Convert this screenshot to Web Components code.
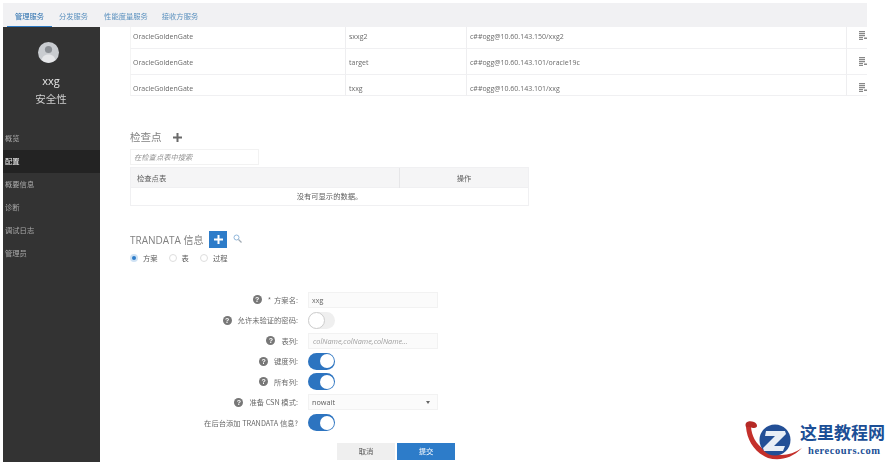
<!DOCTYPE html>
<html lang="zh"><head><meta charset="utf-8"><title>安全性</title>
<style>
html,body{margin:0;height:100%;background:#fff;overflow:hidden}
body{font-family:"Open Sans","Noto Sans CJK SC",sans-serif;color:#555}
</style></head><body>
<ogg-app></ogg-app>
<template id="t-app">
<style>
:host{display:flex;flex-direction:column;width:890px;height:462px;box-sizing:border-box;padding:3px 23px 0 3px;position:relative;overflow:hidden;font-family:"Open Sans","Noto Sans CJK SC",sans-serif}
.body{display:flex;flex:1;min-height:0}
main{flex:1;min-width:0;padding-left:30px;display:flex;flex-direction:column;filter:blur(.45px)}
</style>
<ogg-tabs></ogg-tabs>
<div class="body"><ogg-side></ogg-side>
<main>
<ogg-deptable></ogg-deptable>
<ogg-checkpoints></ogg-checkpoints>
<ogg-trandata></ogg-trandata>
</main></div>
<ogg-mark></ogg-mark>
</template>

<template id="t-tabs">
<style>
:host{display:flex;height:24px;background:#f1f1f3;flex:none;padding-left:4px;font:7.3px "Noto Sans CJK SC",sans-serif;color:#3f7fb5;filter:blur(.45px)}
span{display:flex;align-items:center;justify-content:center;height:24px;box-sizing:border-box;padding-top:2px;white-space:nowrap;flex:none;opacity:.85}
span.a{width:45px;margin-right:7px;border-bottom:1.5px solid #2d7ac4;color:#2a6fae;opacity:1}
</style>
<span class="a">管理服务</span><span style="width:29px;margin-right:16px">分发服务</span><span style="width:44px;margin-right:14px">性能度量服务</span><span style="width:36px">接收方服务</span>
</template>

<template id="t-side">
<style>
:host{display:flex;flex-direction:column;width:97px;flex:none;background:#333;color:#eee;filter:blur(.45px);padding-top:15px;box-sizing:border-box}
.av{width:21px;height:21px;margin-left:35px;display:block}
.u{margin:10px 0 0;text-align:center;font:11px/15px "Open Sans",sans-serif;padding-right:1px;color:#e6e6e6}
.r{text-align:center;font:10.5px/17px "Noto Sans CJK SC",sans-serif;margin-top:2px;padding-right:1px;color:#cfcfcf}
nav{display:flex;flex-direction:column;margin-top:20px;font:7.3px/23px "Noto Sans CJK SC",sans-serif;color:#aaa}
nav span{height:23px;padding-left:2px}
nav .on{background:#232323;color:#f2f2f2}
</style>
<svg class="av" viewBox="0 0 21 21"><circle cx="10.5" cy="10.5" r="10.5" fill="#c9ccd0"/><circle cx="10.5" cy="7.5" r="3.6" fill="#8b8f94"/><path d="M3.5 18c1-4 3.600-5.600 7-5.600s6 1.600 7 5.600a10.500 10.500 0 0 1-14 0z" fill="#e6e7e9"/></svg>
<div class="u">xxg</div><div class="r">安全性</div>
<nav><span>概览</span><span class="on">配置</span><span>概要信息</span><span>诊断</span><span>调试日志</span><span>管理员</span></nav>
</template>

<template id="t-deptable">
<style>
:host{display:grid;grid-template-columns:215px 121px 380px 21px;grid-template-rows:22px 26px 21px;flex:none;font-size:7px;color:#6a6a6a}
div{display:flex;align-items:center;border-bottom:1px solid #f0f0f2;box-sizing:border-box;padding-left:3px;padding-top:2px;border-left:1px solid #eeeef0}
div.f{border-left:1px solid #f4f4f4;padding-left:2px}
.r1{padding-top:0;padding-bottom:2px}
.r3{padding-top:7px}
.ic{padding-left:0}
</style>
<div class="f r1">OracleGoldenGate</div><div class="r1">sxxg2</div><div class="r1">c##ogg@10.60.143.150/xxg2</div><div class="ic r1"><ogg-doc></ogg-doc></div>
<div class="f">OracleGoldenGate</div><div>target</div><div>c##ogg@10.60.143.101/oracle19c</div><div class="ic"><ogg-doc></ogg-doc></div>
<div class="f r3">OracleGoldenGate</div><div class="r3">txxg</div><div class="r3">c##ogg@10.60.143.101/xxg</div><div class="ic r3"><ogg-doc></ogg-doc></div>
</template>

<template id="t-doc">
<style>:host{display:block;width:8px;height:9px;margin:-3px 0 0 12px}svg{display:block}</style>
<svg width="8" height="9" viewBox="0 0 8 9"><path d="M0 0h6v1.200H0zM0 2h6v1.200H0zM0 4h6v1.200H0zM0 6h4v1.200H0zM0 8h4v1H0zM5 6.500h3v1.600H5z" fill="#888"/></svg>
</template>

<template id="t-check">
<style>
:host{display:block;flex:none;margin-top:33px;width:399px}
h2{margin:0;font:400 10.5px/16px "Noto Sans CJK SC",sans-serif;color:#808080;display:flex;align-items:center;height:16px}
svg{margin-left:11px}
.s{margin-top:4px;width:129px;height:16px;border:1px solid #f2f2f2;box-sizing:border-box;font:italic 7.3px/14px "Noto Sans CJK SC",sans-serif;color:#929292;padding-left:3px}
.h{display:grid;grid-template-columns:268px 1fr;height:21px;margin-top:2px;background:#f5f5f6;border:1px solid #f0f0f2;box-sizing:border-box;font:7.3px/20px "Noto Sans CJK SC",sans-serif;color:#5c5c5c}
.h span:first-child{padding-left:6px}
.h span:last-child{text-align:center;border-left:1px solid #e6e6e8}
.e{height:18px;border:1px solid #f0f0f2;border-top:0;box-sizing:border-box;text-align:center;font:7.3px/17px "Noto Sans CJK SC",sans-serif;color:#5c5c5c}
</style>
<h2>检查点<svg width="9" height="9" viewBox="0 0 9 9"><path d="M3.500 0h2v3.500H9v2H5.500V9h-2V5.500H0v-2h3.500z" fill="#6a6a6a"/></svg></h2>
<div class="s">在检查点表中搜索</div>
<div class="h"><span>检查点表</span><span>操作</span></div>
<div class="e">没有可显示的数据。</div>
</template>

<template id="t-tran">
<style>
:host{display:block;flex:none;margin-top:25px}
.t{display:flex;align-items:center;height:17px;font:400 10px/17px "Open Sans","Noto Sans CJK SC",sans-serif;color:#808080}
.tx{margin-top:1px;width:72px;white-space:nowrap}
.b{width:18px;height:17px;background:#2d7cc9;display:flex;align-items:center;justify-content:center;margin:0 0 0 7px}
.m{margin-left:6px;margin-top:-2px}
.radios{display:flex;align-items:center;height:14px;margin-top:3px;font:7.3px/14px "Noto Sans CJK SC",sans-serif;color:#5c5c5c}
.radios i{width:8px;height:8px;border-radius:50%;border:1px solid #ddd;box-sizing:border-box;margin-right:5px;display:block;background:#fff}
.radios i.on{background:#2d7cc9;border:2px solid #cfe2f4}
.radios span{margin-right:11px}
form{display:grid;grid-template-columns:178px 130px;margin-top:24.500px;grid-auto-rows:20.500px;align-items:center;font:7.3px "Noto Sans CJK SC",sans-serif;color:#6a6a6a}
label{justify-self:end;display:flex;align-items:center;padding-right:10px}
label b{width:9px;height:9px;border-radius:50%;background:#777;color:#fff;font:700 7px/9px "Liberation Sans",sans-serif;text-align:center;margin-right:6px;display:block}
label em{font-style:normal;margin-right:3px}
.in{height:16px;border:1px solid #f2f2f2;box-sizing:border-box;line-height:14px;padding-left:3px;background:#fbfbfb;color:#6a6a6a}
.ph{font-style:italic;color:#a0a0a0;font-family:"Open Sans",sans-serif;font-size:7.3px;padding-left:4px}
.sel{display:flex;justify-content:space-between;align-items:center;padding-right:7px;font-family:"Open Sans",sans-serif;font-size:7.3px;color:#5c5c5c}
.sel::after{content:"";border:2.500px solid transparent;border-top:3px solid #666;margin-top:3px}
.sw{width:27px;height:17px;border-radius:9px;background:#2d74c0;position:relative;display:block}
.sw::after{content:"";position:absolute;right:1.500px;top:1.500px;width:14px;height:14px;border-radius:50%;background:#fff}
.sw.off{background:#efefef}
.sw.off::after{right:auto;left:0;top:0;width:15px;height:15px;border:1px solid #ccc}
.act{display:flex;gap:2px;margin:9.500px 0 0 207px;font:7.3px/17px "Noto Sans CJK SC",sans-serif}
.act span{width:58px;height:17px;text-align:center}
.c{background:#efefef;color:#555}.o{background:#2d7cc9;color:#fff}
</style>
<div class="t"><span class="tx">TRANDATA 信息</span><span class="b"><svg width="9" height="9" viewBox="0 0 9 9"><path d="M3.500 0h2v3.500H9v2H5.500V9h-2V5.500H0v-2h3.500z" fill="#fff"/></svg></span>
<svg class="m" width="9" height="9" viewBox="0 0 9 9"><circle cx="3.500" cy="3.500" r="2.500" fill="none" stroke="#8fb6da" stroke-width="1"/><path d="M5.500 5.500L8.500 8.500" stroke="#a2abb4" stroke-width="1.300"/></svg></div>
<div class="radios"><i class="on"></i><span>方案</span><i></i><span>表</span><i></i><span>过程</span></div>
<form>
<label><b>?</b><em>*</em>方案名:</label><div class="in">xxg</div>
<label><b>?</b>允许未验证的密码:</label><span class="sw off"></span>
<label><b>?</b>表列:</label><div class="in ph">colName,colName,colName...</div>
<label><b>?</b>键度列:</label><span class="sw"></span>
<label><b>?</b>所有列:</label><span class="sw"></span>
<label><b>?</b>准备 CSN 模式:</label><div class="in sel">nowait</div>
<label>在后台添加 TRANDATA 信息?</label><span class="sw"></span>
</form>
<div class="act"><span class="c">取消</span><span class="o">提交</span></div>
</template>

<template id="t-mark">
<style>
:host{position:absolute;left:743px;top:418px;width:147px;height:44px;display:block}
svg{position:absolute;left:0;top:0}
.cn{position:absolute;left:57px;top:4px;font:700 17px/20px "Noto Sans CJK SC",sans-serif;color:#1c4f96;white-space:nowrap}
.en{position:absolute;left:65px;top:27px;font:700 10.5px/12px "Liberation Serif",serif;letter-spacing:.55px;color:#1c4f96;white-space:nowrap}
</style>
<svg width="60" height="44" viewBox="0 0 60 44">
<path d="M3 9C1 4 6 2 11 4c4 2 4 6 0 6-3 0-4-1-8-1z" fill="#b52a26"/>
<path d="M3 9c1 13 8 25 22 31 11 3 23 1 34-10-10 7-21 9-31 5C15 30 9 20 8 9z" fill="#c4302b"/>
<circle cx="32" cy="22" r="15.500" fill="#234f96"/>
<path d="M23 13h19l1 3-12 12h11l-2 5H21l-1-3 12-12h-10z" fill="#e8eef6"/>
</svg>
<div class="cn">这里教程网</div><div class="en">herecours.com</div>
</template>

<script>
const def=(n,id)=>customElements.define(n,class extends HTMLElement{constructor(){super();this.attachShadow({mode:'open'}).appendChild(document.getElementById(id).content.cloneNode(true))}});
[['ogg-app','t-app'],['ogg-tabs','t-tabs'],['ogg-side','t-side'],['ogg-deptable','t-deptable'],['ogg-doc','t-doc'],['ogg-checkpoints','t-check'],['ogg-trandata','t-tran'],['ogg-mark','t-mark']].forEach(a=>def(a[0],a[1]));
</script>
</body></html>
